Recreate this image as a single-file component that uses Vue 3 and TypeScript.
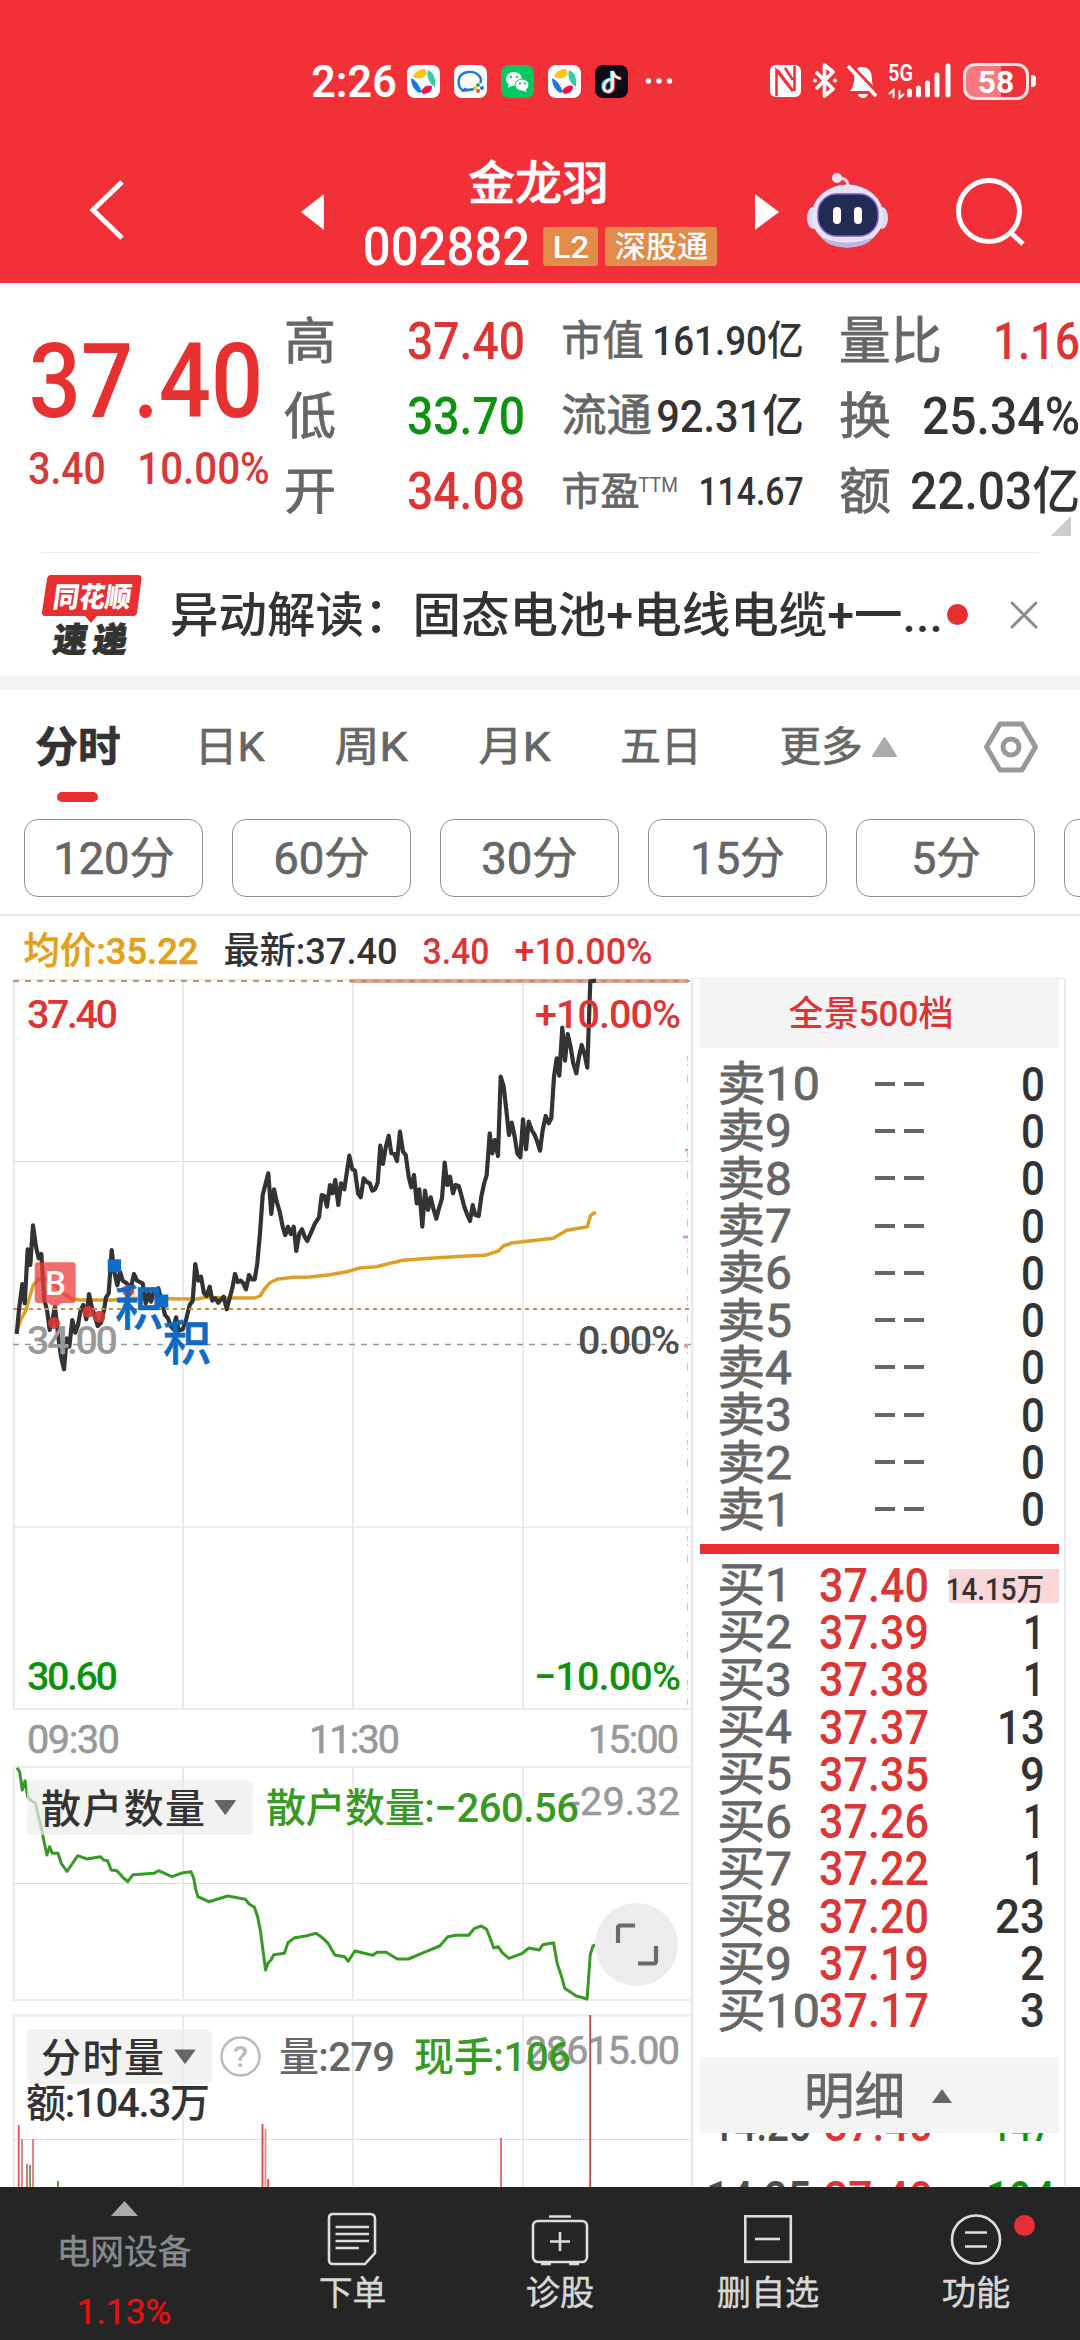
<script setup lang="ts">
import { h } from 'vue'

interface FitProps { t: string; w: number; s: number }

// Text condensed to a given width; the box is exactly as tall as the digits.
const Fit = (p: FitProps) => {
  const s = Number(p.s)
  const w = Number(p.w)
  const cap = Math.round(s * 0.71)
  return h('svg', { class: 'fit', width: w, height: cap }, [
    h('text', {
      x: -s * 0.04,
      y: cap,
      'font-size': s,
      fill: 'currentColor',
      stroke: 'currentColor',
      textLength: w + s * 0.08,
      lengthAdjust: 'spacingAndGlyphs',
    }, p.t),
  ])
}
Fit.props = ['t', 'w', 's']

const plot = (raw: string, ox: number, oy: number, ux: number, uy: number) =>
  raw.trim().split(/\s+/).map((pair) => {
    const [x, y] = pair.split(',').map(Number)
    return `${(ox + x / ux).toFixed(1)},${(oy + y / uy).toFixed(1)}`
  }).join(' ')

const morning = plot(`50,1122 58,1040 67,972 74,1030 83,868 91,915 99,796 108,860 116,895 124,882 133,1020 141,1050 149,1110 158,1075 165,1040
175,1130 183,1190 192,1228 200,1135 208,1160 217,1080 226,1118 234,1095 242,1050 250,1035 259,1078 267,1002 275,1040 284,1068 293,1098 303,1088
312,1050 318,1012 326,1000 335,870 343,935 352,976 360,935 368,962 380,970 392,985 402,942 411,962 428,970 437,1030 446,1000 453,1025 461,995
475,985 487,1030 495,1065 504,1075 512,1098 520,1108 528,1072 536,1112 548,1108 558,1080 569,1035 578,1022 586,912 595,962 603,950 612,1000
620,1008 629,980 637,1022 646,1015 655,1028 671,1010 680,1048 690,1010 697,985 705,942 713,966 722,962 730,970 738,988 747,945 755,958 764,958
772,910 780,820 788,705 797,670 805,640 814,762 822,688 830,725 839,755 848,800 856,825 864,800 872,822 881,800 889,873 898,820 906,808 914,830
922,843 932,820 945,790 957,772 965,705 973,708 981,740 990,675 998,700 1006,660 1015,735 1023,670 1033,688`, 0, 960, 3, 3)

const afternoon = plot(`28,587 37,628 45,632 54,700 62,712 71,655 80,666 89,670 97,692 105,688 113,668 121,557 129,612 137,562 146,527 154,580
163,582 171,603 180,515 189,575 197,585 206,650 214,682 222,645 230,730 238,688 247,800 255,692 264,750 272,712 280,745 289,776 297,745 306,715
314,608 322,675 330,650 339,700 347,675 356,678 364,705 373,740 381,762 390,783 398,735 406,765 416,768 424,710 432,672 440,645 449,520 457,580
465,540 474,588 482,350 491,380 499,450 507,525 515,488 524,530 532,580 541,592 549,478 558,568 566,485 575,510 584,525 592,545 600,572 608,510
617,468 626,490 634,475 642,350 650,295 658,347 667,203 675,302 683,222 692,262 700,310 709,340 717,290 725,255 734,285 742,323 751,64 768,62`, 340, 960, 3, 3)

const priceLine = `${morning} ${afternoon}`

const avgLine = `${plot(`50,1115 62,1080 78,1050 88,1015 100,975 115,958 135,955 165,975 190,1000 215,1016 240,1020 340,1020 380,1015 500,1016
590,1017 620,1012 680,1014 765,1014 780,1008 795,985 810,968 830,958 880,952 930,951 990,944`, 0, 960, 3, 3)} ${plot(`20,935 60,924 110,920
150,910 190,901 270,895 380,888 435,886 475,873 490,858 515,849 560,844 640,835 680,811 742,800 752,766 760,760 768,758`, 340, 960, 3, 3)}`

const retailLine = plot(`38,383 44,395 50,450 56,422 62,470 70,482 80,490 86,530 92,560 98,600 105,645 111,620 117,640 130,640 137,670 150,694
160,675 174,647 195,657 225,650 232,660 241,662 249,690 262,692 275,712 286,725 298,704 345,700 355,692 385,710 410,698 428,695 434,715 438,745
443,770 468,785 510,768 550,778 558,792 570,802 577,830 583,870 588,920 595,990 600,970 607,960 613,944 637,940 645,908 660,893 685,888 708,880
722,893 735,910 750,945 772,950 780,964 795,933 835,946 845,937 865,937 890,957 915,957 950,937 985,918 1003,890 1020,886 1050,886 1062,866
1078,858 1090,868 1098,895 1106,924 1116,920 1125,938 1140,955 1170,940 1185,924 1208,930 1216,914 1240,908 1248,970 1258,1010 1265,1045
1290,1067 1315,1077 1322,945 1328,918 1334,915`, 0, 1640, 2.24, 3)

const volumes = [
  { x: 18.7, y: 2125, c: '#e05555' }, { x: 22, y: 2139, c: '#c98585' }, { x: 27, y: 2164, c: '#d86a5a' },
  { x: 30, y: 2165, c: '#5ea04c' }, { x: 33, y: 2139, c: '#e07a70' }, { x: 58, y: 2181, c: '#379a24' },
  { x: 262.5, y: 2124, c: '#d84848' }, { x: 265.5, y: 2129, c: '#e58a8a' }, { x: 268.2, y: 2179, c: '#d84848' },
  { x: 501, y: 2138, c: '#e06060' }, { x: 590.2, y: 2015, c: '#cf4040' },
]

const tabs = [
  { t: '日K', w: 67, x: 77 }, { t: '周K', w: 70, x: 73 }, { t: '月K', w: 69, x: 74 }, { t: '五日', w: 78, x: 73 }, { t: '更多', w: 80, x: 81 },
]
const periods = [
  { t: '120分', w: 118 }, { t: '60分', w: 93 }, { t: '30分', w: 93 }, { t: '15分', w: 91 }, { t: '5分', w: 66 },
]
const sells = [10, 9, 8, 7, 6, 5, 4, 3, 2, 1]
const buys = [
  { n: 1, p: '37.40', q: '14.15万', w: 96 }, { n: 2, p: '37.39', q: '1', w: 18 }, { n: 3, p: '37.38', q: '1', w: 18 },
  { n: 4, p: '37.37', q: '13', w: 44 }, { n: 5, p: '37.35', q: '9', w: 21 }, { n: 6, p: '37.26', q: '1', w: 18 },
  { n: 7, p: '37.22', q: '1', w: 18 }, { n: 8, p: '37.20', q: '23', w: 46 }, { n: 9, p: '37.19', q: '2', w: 21 },
  { n: 10, p: '37.17', q: '3', w: 21 },
]
</script>

<template>
  <div class="app">
    <header class="top">
      <div class="status">
        <Fit class="clock" t="2:26" :w="82" :s="44" />
        <svg v-for="k in 5" :key="k" class="app-icon" width="33" height="33" viewBox="0 0 33 33">
          <template v-if="k === 1 || k === 4">
            <rect width="33" height="33" rx="8" fill="#fff" />
            <path d="M6 12 Q9 4 18 4 L20 9 Q14 16 6 12Z" fill="#fcc419" />
            <path d="M21 5 Q30 9 28 22 L24 19 Q19 12 21 5Z" fill="#35cda4" />
            <path d="M4 13 Q10 15 15 27 L12 28 Q4 23 4 13Z" fill="#1677ea" />
            <path d="M14 26 Q19 19 25 21 Q26 28 16 29Z" fill="#ec1450" />
          </template>
          <template v-else-if="k === 2">
            <rect width="33" height="33" rx="8" fill="#fff" />
            <path d="M8 25 C2 19 4 8 14 7 C24 6 29 14 26 18 M20 24 Q14 26 11 24 L8 26Z" fill="none" stroke="#1f78d6" stroke-width="2.4" />
            <circle cx="24" cy="20" r="2" fill="#35a853" /><circle cx="28" cy="23" r="2" fill="#1f78d6" />
            <circle cx="24" cy="26" r="2" fill="#f05138" /><circle cx="21" cy="23" r="2" fill="#fbb817" />
          </template>
          <template v-else-if="k === 3">
            <rect width="33" height="33" rx="8" fill="#07c860" />
            <ellipse cx="13" cy="14" rx="8" ry="7" fill="#fff" /><path d="M8 18 L7 23 L12 20Z" fill="#fff" />
            <ellipse cx="21" cy="20" rx="7" ry="6" fill="#fff" stroke="#07c860" stroke-width="1" /><path d="M24 24 L26 27 L20 25Z" fill="#fff" />
            <circle cx="10" cy="12" r="1.1" fill="#07a850" /><circle cx="16" cy="12" r="1.1" fill="#07a850" />
            <circle cx="19" cy="18.500" r="1" fill="#07a850" /><circle cx="24" cy="18.500" r="1" fill="#07a850" />
          </template>
          <template v-else>
            <rect width="33" height="33" rx="8" fill="#0c0b16" />
            <g fill="none" stroke-width="3">
              <path d="M16.500 14 C5 14 6 28 13 26 Q17 25 16.500 20 V6 Q18 12 24.500 13" stroke="#25e8e2" />
              <path d="M18.500 15 C7 15 8 29 15 27 Q19 26 18.500 21 V7 Q20 13 26.500 14" stroke="#f8305a" />
              <path d="M17.500 14.500 C6 14.500 7 28.500 14 26.500 Q18 25.500 17.500 20.500 V6 Q19 12.500 25.500 13.500" stroke="#fff" stroke-width="2.600" />
            </g>
          </template>
        </svg>
        <svg class="more-dots" width="28" height="8" viewBox="0 0 28 8"><circle cx="3.500" cy="4" r="2.700" fill="#fff" /><circle cx="14" cy="4" r="2.700" fill="#fff" /><circle cx="24.500" cy="4" r="2.700" fill="#fff" /></svg>
        <svg class="radio" width="186" height="38" viewBox="768 62 186 38" fill="none" stroke="#fff">
          <rect x="770" y="65" width="31" height="32" rx="6" fill="#fff" stroke="none" />
          <path d="M776.500 96 V70.500 L792.500 91 M777.500 70 L793 91 M794.500 66 V91 M785 68 L793 80" stroke="#f13038" stroke-width="2.600" />
          <path d="M816 72 L833 89 L824.500 96 V65 L833 72 L816 89" stroke-width="3.600" stroke-linejoin="round" />
          <circle cx="815" cy="80.500" r="2" fill="#fff" stroke="none" /><circle cx="835" cy="80.500" r="2" fill="#fff" stroke="none" />
          <path d="M850 91 Q854 87 854 80 Q854 67 862 67 Q872 67 872 80 Q872 87 876 91Z M858 94 H868 Q867 98 863 98 Q859 98 858 94Z" fill="#fff" stroke="none" />
          <path d="M851 65 L880 95" stroke="#f13038" stroke-width="3" /><path d="M848 66 L876 96" stroke-width="3.400" />
          <text x="888" y="81" font-size="24" font-weight="600" fill="#fff" stroke="none" textLength="25" lengthAdjust="spacingAndGlyphs">5G</text>
          <path d="M889 94 L893.500 90 V98 M899.500 90 V98 L904 94" stroke-width="2" />
          <path d="M909.500 91 V95 M918.500 88 V95 M927.500 83 V95 M937 75 V95 M948 66 V95" stroke-width="5" stroke-linecap="round" />
        </svg>
        <div class="battery"><Fit t="58" :w="34" :s="32" /></div><i class="nub" />
      </div>
      <div class="head">
        <svg width="36" height="60" viewBox="0 0 36 60" class="back"><path d="M33 2 L4 30 L33 58" fill="none" stroke="#fff" stroke-width="5" /></svg>
        <svg width="23" height="36" viewBox="0 0 23 36"><path d="M23 0 V36 L0 18Z" fill="#fff" /></svg>
        <div class="names">
          <Fit class="name" t="金龙羽" :w="137" :s="46" />
          <div class="code"><Fit t="002882" :w="163" :s="54" /><span class="badge b1"><Fit t="L2" :w="34" :s="32" /></span><span class="badge b2"><Fit t="深股通" :w="91" :s="30" /></span></div>
        </div>
        <svg width="24" height="36" viewBox="0 0 24 36"><path d="M0 0 V36 L24 18Z" fill="#fff" /></svg>
        <svg class="robot" width="81" height="76" viewBox="0 0 81 76">
          <path d="M41 14 Q41 6 32 6" fill="none" stroke="#d9d0ee" stroke-width="3" /><circle cx="30" cy="6" r="5" fill="#eae4fb" />
          <ellipse cx="6" cy="46" rx="6" ry="11" fill="#dcd9f4" /><ellipse cx="75" cy="46" rx="6" ry="11" fill="#dcd9f4" />
          <ellipse cx="40.500" cy="44" rx="36" ry="31.500" fill="#e6e4f6" /><path d="M14 65 Q40 76 67 65 Q58 76 40 75.500 Q22 76 14 65Z" fill="#bdb5e2" />
          <rect x="11" y="22" width="60" height="42" rx="19" fill="#232b52" stroke="#7a55dc" stroke-width="1.500" />
          <rect x="26" y="35" width="8" height="17" rx="4" fill="#fff" /><rect x="47" y="35" width="8" height="17" rx="4" fill="#fff" />
        </svg>
        <svg class="search" width="70" height="70" viewBox="0 0 70 70"><circle cx="33" cy="34" r="30.500" fill="none" stroke="#fff" stroke-width="5" /><path d="M54 55 L67 67" stroke="#fff" stroke-width="5" /></svg>
      </div>
    </header>

    <section class="quote">
      <div class="last red"><Fit t="37.40" :w="226" :s="104" />
        <div class="chg"><Fit t="3.40" :w="74" :s="44" /><Fit t="10.00%" :w="129" :s="44" /></div>
      </div>
      <div class="col c2">
        <div><Fit class="lab" t="高" :w="48" :s="50" /><Fit class="red" t="37.40" :w="114" :s="51" /></div>
        <div><Fit class="lab" t="低" :w="48" :s="50" /><Fit class="green" t="33.70" :w="114" :s="51" /></div>
        <div><Fit class="lab" t="开" :w="48" :s="50" /><Fit class="red" t="34.08" :w="114" :s="51" /></div>
      </div>
      <div class="col c3">
        <div><Fit class="lab" t="市值" :w="79" :s="41" /><Fit t="161.90亿" :w="148" :s="41" /></div>
        <div><Fit class="lab" t="流通" :w="87" :s="44" /><Fit t="92.31亿" :w="144" :s="45" /></div>
        <div><span class="pe"><Fit class="lab" t="市盈" :w="75" :s="39" /><Fit class="lab ttm" t="TTM" :w="38" :s="21" /></span><Fit t="114.67" :w="102" :s="39" /></div>
      </div>
      <div class="col c4">
        <div><Fit class="lab" t="量比" :w="99" :s="51" /><Fit class="red" t="1.16" :w="83" :s="51" /></div>
        <div><Fit class="lab" t="换" :w="48" :s="50" /><Fit t="25.34%" :w="154" :s="51" /></div>
        <div><Fit class="lab" t="额" :w="48" :s="50" /><Fit t="22.03亿" :w="166" :s="51" /></div>
      </div>
      <svg class="corner" width="20" height="20"><path d="M20 0 V20 H0Z" fill="#ccc" /></svg>
    </section>

    <section class="news">
      <svg class="logo" width="100" height="80" viewBox="42 573 100 80">
        <path d="M51 573 H138 Q142 573 141.500 577 L137 611 Q136.500 614 133 614 H97 L91 621 L85 614 H45 Q41.500 614 42 610 L47 577 Q47.500 573 51 573Z" fill="#e72f31" />
        <g font-weight="900" transform="skewX(-8)">
          <text x="137" y="605" font-size="28" fill="#fff" textLength="78" lengthAdjust="spacingAndGlyphs">同花顺</text>
          <text x="143" y="650" font-size="34" fill="#333" stroke="#333" textLength="74" lengthAdjust="spacing">速递</text>
        </g>
      </svg>
      <Fit class="headline" t="异动解读：固态电池+电线电缆+一..." :w="769" :s="48" />
      <i class="dot" />
      <svg class="close" width="28" height="28"><path d="M2 2 L26 26 M26 2 L2 26" stroke="#8a8a8a" stroke-width="3" stroke-linecap="round" /></svg>
    </section>

    <nav class="tabs">
      <div class="tab on"><Fit t="分时" :w="82" :s="42" /><i /></div>
      <div v-for="t in tabs" :key="t.t" class="tab" :style="{ marginLeft: t.x + 'px' }"><Fit :t="t.t" :w="t.w" :s="41" /></div>
      <svg class="tri" width="25" height="20"><path d="M12.500 1 L24 19 H1Z" fill="#aaa" stroke="#aaa" stroke-width="2" stroke-linejoin="round" /></svg>
      <svg class="gear" width="54" height="52" viewBox="0 0 54 52" fill="none" stroke="#999" stroke-width="5" stroke-linejoin="round"><path d="M16 3 H38 L51.500 26 L38 49 H16 L2.500 26Z" /><circle cx="27" cy="26" r="8" /></svg>
    </nav>
    <div class="chips">
      <div v-for="p in periods" :key="p.t" class="chip"><Fit :t="p.t" :w="p.w" :s="44" /></div>
      <div class="chip" />
    </div>

    <div class="summary">
      <Fit class="gold" t="均价:35.22" :w="172" :s="37" /><Fit t="最新:37.40" :w="171" :s="37" />
      <Fit class="red" t="3.40" :w="64" :s="37" /><Fit class="red" t="+10.00%" :w="135" :s="37" />
    </div>

    <main class="body">
      <div class="charts">
        <svg width="694" height="1209" viewBox="0 978 694 1209" class="chart">
          <g stroke="#ebebeb" stroke-width="2" fill="none">
            <path d="M14 979 V1709 H692 M183 980 V1709 M353 980 V1709 M523 980 V1709 M13 979.500 H692" />
            <path d="M14 2000 V1767 H692 M183 1767 V2000 M353 1767 V2000 M523 1767 V2000 M13 2000 H692" />
            <path d="M14 2187 V2015.500 H692 M183 2016 V2187 M353 2016 V2187 M523 2016 V2187" />
            <path d="M13 1161.500 H692 M13 1527 H692 M13 1883.500 H692 M13 2139.500 H692" stroke="#dedede" stroke-width="1" />
            <path d="M692 978 V2187" stroke-width="3" />
          </g>
          <path d="M350 981 H688" stroke="#eba0a0" stroke-width="4" />
          <path d="M13 981 H690" stroke="#b99563" stroke-width="2" stroke-dasharray="6 6" />
          <path d="M13 1344.500 H692" stroke="#999" stroke-width="1.700" stroke-dasharray="6 6" />
          <path d="M687.500 1056 V1705" stroke="#efb9b9" stroke-width="1" stroke-dasharray="5 3 2 9 8 14 1 6" />
          <path d="M685 1150 h3 M683 1237 h5 M684 1346 h4" stroke="#e59b9b" stroke-width="3" />
          <polyline :points="avgLine" fill="none" stroke="#dda026" stroke-width="3.500" stroke-linejoin="round" />
          <polyline :points="priceLine" fill="none" stroke="#333" stroke-width="4.200" stroke-linejoin="round" />
          <g class="t39">
            <text x="27" y="1028" class="f-red" textLength="91">37.40</text>
            <text x="535" y="1028" class="f-red" textLength="146">+10.00%</text>
            <text x="27" y="1354" fill="#999" textLength="91">34.00</text>
            <text x="578" y="1354" fill="#4d4d4d" textLength="102">0.00%</text>
            <text x="27" y="1690" class="f-green" textLength="91">30.60</text>
            <text x="534" y="1690" class="f-green" textLength="147">−10.00%</text>
            <g class="grey">
              <text x="27" y="1752.500" textLength="93">09:30</text>
              <text x="309" y="1752.500" textLength="91">11:30</text>
              <text x="588" y="1752.500" textLength="91">15:00</text>
            </g>
          </g>
          <path d="M13 1309 H690" stroke="#d08a4a" stroke-width="2" stroke-dasharray="4 4" />
          <g fill="#d93636" fill-opacity=".9"><circle cx="54" cy="1323" r="6" /><circle cx="88.300" cy="1311.700" r="6" /><circle cx="99.300" cy="1316.700" r="6" /><circle cx="128.300" cy="1290.700" r="6" /></g>
          <path d="M37.700 1262.300 H72.700 Q75.700 1262.300 75.700 1265.300 V1300 Q75.700 1303 72.700 1303 H62 L55 1307.500 L48 1303 H37.700 Q34.700 1303 34.700 1300 V1265.300 Q34.700 1262.300 37.700 1262.300Z" fill="#e93c3c" fill-opacity=".75" />
          <text x="45" y="1294.500" font-size="33" font-weight="500" fill="#fff">B</text>
          <g fill="#0d6dc9"><rect x="107.700" y="1259.300" width="13.300" height="13" /><rect x="155" y="1294.500" width="13.300" height="13" /></g>
          <g fill="#0d6bc3" stroke="#0d6bc3" stroke-width=".6" font-size="48"><text x="115" y="1324.500">积</text><text x="163" y="1359.500">积</text></g>

          <polyline :points="retailLine" fill="none" stroke="#379a24" stroke-width="3" stroke-linejoin="round" />
          <rect x="27" y="1780" width="226" height="55" rx="7" fill="#ececec" fill-opacity=".7" />
          <path d="M215 1800.500 H235.500 L225.300 1814.500Z" fill="#666" stroke="#666" stroke-linejoin="round" />
          <g class="t39 grey">
            <text x="569" y="1815" textLength="111">-29.32</text>
            <text x="525" y="2064" textLength="155">28615.00</text>
          </g>
          <g v-for="v in volumes" :key="v.x"><rect :x="v.x - 0.9" :y="v.y" width="1.800" :height="2187 - v.y" :fill="v.c" /></g>
          <rect x="27" y="2029" width="185" height="55" rx="7" fill="#ececec" fill-opacity=".7" />
          <path d="M175 2050 H195 L185 2063.500Z" fill="#666" stroke="#666" stroke-linejoin="round" />
          <g class="t40">
            <text x="41" y="1823" fill="#333" textLength="164">散户数量</text>
            <text x="266" y="1822" fill="#379a24" textLength="313">散户数量:−260.56</text>
            <text x="41" y="2071.500" fill="#333" textLength="123">分时量</text>
            <text x="279" y="2071" fill="#666" textLength="116">量:279</text>
            <text x="414" y="2071" fill="#379a24" textLength="157">现手:106</text>
            <text x="26" y="2117" fill="#333" textLength="184">额:104.3万</text>
          </g>
          <circle cx="240.500" cy="2056.500" r="19" fill="none" stroke="#bbb" stroke-width="2.500" />
          <text x="240.500" y="2067" text-anchor="middle" font-size="30" fill="#bbb">?</text>
          <circle cx="636.500" cy="1944.500" r="41.500" fill="#ececec" />
          <path d="M618 1943 V1928 Q618 1925.500 620.500 1925.500 H635 M656 1946 V1961 Q656 1963.500 653.500 1963.500 H638" fill="none" stroke="#6a6a6a" stroke-width="4.200" />
        </svg>
      </div>

      <aside class="book">
        <div class="pano red"><Fit t="全景500档" :w="162" :s="35" /></div>
        <div class="rows sell">
          <div v-for="n in sells" :key="n" class="row">
            <Fit class="lab side" :t="'卖' + n" :w="n > 9 ? 99 : 71" :s="47" /><span class="dashes"><i /><i /></span><Fit class="qty" t="0" :w="20" :s="48" />
          </div>
        </div>
        <i class="bar" />
        <div class="rows buy">
          <div v-for="b in buys" :key="b.n" class="row" :class="{ hot: b.n === 1 }">
            <Fit class="lab side" :t="'买' + b.n" :w="b.n > 9 ? 99 : 71" :s="47" /><Fit class="red price" :t="b.p" :w="106" :s="48" /><Fit class="qty" :t="b.q" :w="b.w" :s="b.n === 1 ? 31 : 48" />
          </div>
        </div>
        <div class="detail"><Fit t="明细" :w="97" :s="50" /><svg width="20" height="14"><path d="M10 0 L20 14 H0Z" fill="#666" /></svg></div>
        <div class="ticks">
          <div class="tick t1"><Fit class="tm" t="14:25" :w="95" :s="48" /><Fit class="red" t="37.40" :w="105" :s="48" /><Fit class="green tq" t="147" :w="57" :s="48" /></div>
          <div class="tick t2"><Fit class="tm" t="14:25" :w="101" :s="48" /><Fit class="red" t="37.40" :w="105" :s="48" /><Fit class="green tq" t="194" :w="65" :s="48" /></div>
        </div>
      </aside>
    </main>

    <footer class="dock">
      <div class="item first">
        <svg width="27" height="15"><path d="M13.500 0 L27 15 H0Z" fill="#aaa" /></svg>
        <Fit class="sector" t="电网设备" :w="132" :s="34" /><Fit class="pct" t="1.13%" :w="92" :s="35" />
      </div>
      <div class="item">
        <svg width="50" height="54" viewBox="0 0 50 54" fill="none" stroke="#ddd" stroke-width="2.600"><path d="M6 2 H43 Q48 2 48 7 V41 L38 52 H6 Q2 52 2 48 V6 Q2 2 6 2Z" /><path d="M8.500 15 H42 M8.500 22 H42 M8.500 29 H42 M8.500 36 H32" /></svg>
        <Fit t="下单" :w="65" :s="34" />
      </div>
      <div class="item">
        <svg width="58" height="54" viewBox="0 0 58 54" fill="none" stroke="#ddd" stroke-width="2.600"><rect x="2" y="9" width="54" height="41" rx="5" /><path d="M18 4.500 H40 M29 20 V39 M19 29.500 H39 M10 52 H20 M38 52 H48" /></svg>
        <Fit t="诊股" :w="66" :s="34" />
      </div>
      <div class="item">
        <svg width="50" height="54" viewBox="0 0 50 54" fill="none" stroke="#ddd" stroke-width="2.600"><rect x="2.300" y="4.300" width="45.500" height="45.500" /><path d="M12 27 H37" /></svg>
        <Fit t="删自选" :w="100" :s="34" />
      </div>
      <div class="item">
        <svg width="52" height="54" viewBox="0 0 52 54" fill="none" stroke="#ddd" stroke-width="2.600"><circle cx="26" cy="27.500" r="24" /><path d="M15 20.500 H37 M15 34.500 H37" /></svg>
        <Fit t="功能" :w="66" :s="34" /><i class="notice" />
      </div>
    </footer>
  </div>
</template>

<style>
html, body { margin: 0; overflow: hidden; background: #fff; }
</style>

<style scoped>
.app { width: 1080px; height: 2340px; overflow: hidden; display: flex; flex-direction: column; background: #fff; color: #333;
  font-family: Roboto, "Noto Sans CJK SC", sans-serif; font-weight: 500; }
.app * { box-sizing: border-box; }
svg { display: block; flex: none; }
.fit { overflow: visible; stroke-width: 0; }
.red { color: #dd3434; }
.green { color: #0b920e; }
.gold { color: #e3a018; stroke-width: 0.5px; }
.lab { color: #666; }

.top { height: 283px; flex: none; background: #f13038; color: #fff; }
.status { height: 148px; padding: 14px 0 0 313px; display: flex; align-items: center; }
.clock { font-weight: 600; margin-right: 12px; }
.app-icon { margin-right: 14px; }
.more-dots { margin-left: 3px; }
.radio { margin-left: 95px; }
.battery { margin-left: 9px; width: 66px; height: 37px; border: 3px solid #ffe2e2; border-radius: 12px; display: flex; align-items: center; justify-content: center; font-weight: 700;
  background: linear-gradient(90deg, #f5797e 58%, #f13038 58%); }
.nub { width: 5px; height: 12px; margin-left: 2px; border-radius: 0 4px 4px 0; background: #fff; }
.head { height: 135px; padding-left: 89px; display: flex; align-items: center; }
.head > svg { margin-top: -7px; }
.head > .back { margin-right: 176px; margin-top: -11px; }
.names { width: 431px; display: flex; flex-direction: column; align-items: center; gap: 28px; }
.name { margin-right: 3px; stroke-width: 0.7px; }
.code { display: flex; align-items: center; padding-left: 3px; height: 39px; }
.badge { height: 39px; display: flex; align-items: center; justify-content: center; background: #e28c49; border-radius: 3px; }
.b1 { width: 55px; margin-left: 15px; }
.b2 { width: 112px; margin-left: 7px; }
.head > .robot { margin-left: 28px; margin-top: -12px; }
.head > .search { margin-left: 68px; margin-top: -8px; }

.quote { position: relative; height: 269px; flex: none; display: flex; padding-top: 20px; }
.last { width: 286px; padding: 40px 0 0 33px; display: flex; flex-direction: column; font-weight: 500; color: #e73030; }
.chg { display: flex; gap: 35px; margin: 36px 0 0 -3px; color: #d93838; }
.col { display: flex; flex-direction: column; }
.col > div { height: 75px; display: flex; align-items: center; justify-content: space-between; }
.c2 { width: 237px; margin-right: 40px; }
.c3 { width: 239px; margin-right: 39px; }
.c4 { width: 237px; }
.col .lab { font-weight: 400; stroke-width: 0.8px; }
.pe { display: flex; align-items: flex-start; gap: 1px; }
.col .lab.ttm { stroke-width: 0; }
.corner { position: absolute; right: 9px; top: 233px; }

.news { height: 124px; flex: none; margin: 0 41px; border-top: 1px solid #ebebeb; display: flex; align-items: center; }
.logo { margin-left: 1px; }
.headline { margin-left: 30px; }
.dot { width: 21px; height: 21px; margin-left: 6px; border-radius: 50%; background: #e72f31; }
.close { margin-left: 42px; }

.tabs { height: 143px; flex: none; border-top: 14px solid #f4f4f4; padding: 0 0 16px 37px; display: flex; align-items: center; color: #666; font-weight: 400; stroke-width: 0.6px; }
.tab { position: relative; }
.tab .fit, .chip .fit { stroke-width: 0.7px; }
.on { color: #333; font-weight: 700; }
.on i { position: absolute; left: 20px; top: 60px; width: 41px; height: 10px; border-radius: 5px; background: #e72f31; }
.tri { margin-left: 11px; }
.gear { margin-left: 87px; }
.chips { height: 97px; flex: none; padding-left: 24px; display: flex; gap: 29px; overflow: hidden; border-bottom: 2px solid #e8e8e8; font-weight: 400; color: #666; }
.chip { width: 179px; height: 78px; flex: none; border: 1.500px solid #8f8f8f; border-radius: 14px; display: flex; align-items: center; justify-content: center; }
.summary { height: 62px; flex: none; padding: 8px 0 0 25px; display: flex; align-items: center; gap: 28px; }

.body { height: 1209px; flex: none; display: flex; overflow: hidden; }
.charts { width: 694px; }
.chart text { font-weight: 500; }
.t39 text { font-size: 39.500px; }
.t40 text { font-size: 40px; }
.chart .grey text { fill: #999; font-weight: 400; stroke: #999; stroke-width: 0.6px; }
.f-red { fill: #dd3434; }
.f-green { fill: #0b920e; }
.book { width: 372px; border: 1px solid #ebebeb; border-width: 1px 2px 0 0; padding: 0 5px 0 6px; display: flex; flex-direction: column; }
.pano { height: 69px; flex: none; background: #f4f4f4; display: flex; align-items: center; justify-content: center; padding-right: 18px; }
.rows { display: flex; flex-direction: column; flex: none; }
.sell { margin-top: 12px; height: 484px; }
.row { height: 47.300px; flex: none; display: flex; align-items: center; position: relative; padding: 0 16px 0 19px; }
.side { font-weight: 400; stroke-width: 0.8px; }
.dashes { display: flex; gap: 9px; position: absolute; left: 175px; }
.dashes i { width: 20px; height: 4px; background: #666; }
.price { position: absolute; left: 121px; }
.qty { margin-left: auto; }
.bar { height: 10px; flex: none; background: #e72f31; }
.buy { margin-top: 7px; height: 496px; }
.hot { background: linear-gradient(#f9d6d7, #f9d6d7) no-repeat 249px 8px / 110px 34px; }
.hot .qty { position: relative; top: 4px; }
.detail { height: 76px; flex: none; background: #f4f4f4; color: #666; display: flex; align-items: center; padding: 1px 0 0 106px; gap: 29px; font-weight: 400; }
.detail .fit { stroke-width: 0.8px; }
.ticks { height: 55px; overflow: hidden; position: relative; }
.tick { height: 34px; display: flex; padding-right: 6px; }
.t1 { margin: -26px 0 40px; padding-left: 14px; padding-right: 9px; }
.t2 { padding-left: 8px; }
.tick .tm { color: #4d4d4d; margin-right: 17px; }
.tq { margin-left: auto; }

.dock { height: 153px; flex: none; background: #252525; display: flex; color: #d8d8d8; font-weight: 400; }
.item { width: 208px; position: relative; display: flex; flex-direction: column; align-items: center; padding-top: 25px; gap: 15px; }
.item .fit { stroke-width: 0.4px; }
.first { width: 248px; padding-top: 14px; gap: 24px; }
.sector { color: #858d92; }
.pct { color: #e80f0f; margin-top: 11px; }
.notice { position: absolute; left: 142px; top: 28px; width: 21px; height: 21px; border-radius: 50%; background: #e72f31; }
</style>
